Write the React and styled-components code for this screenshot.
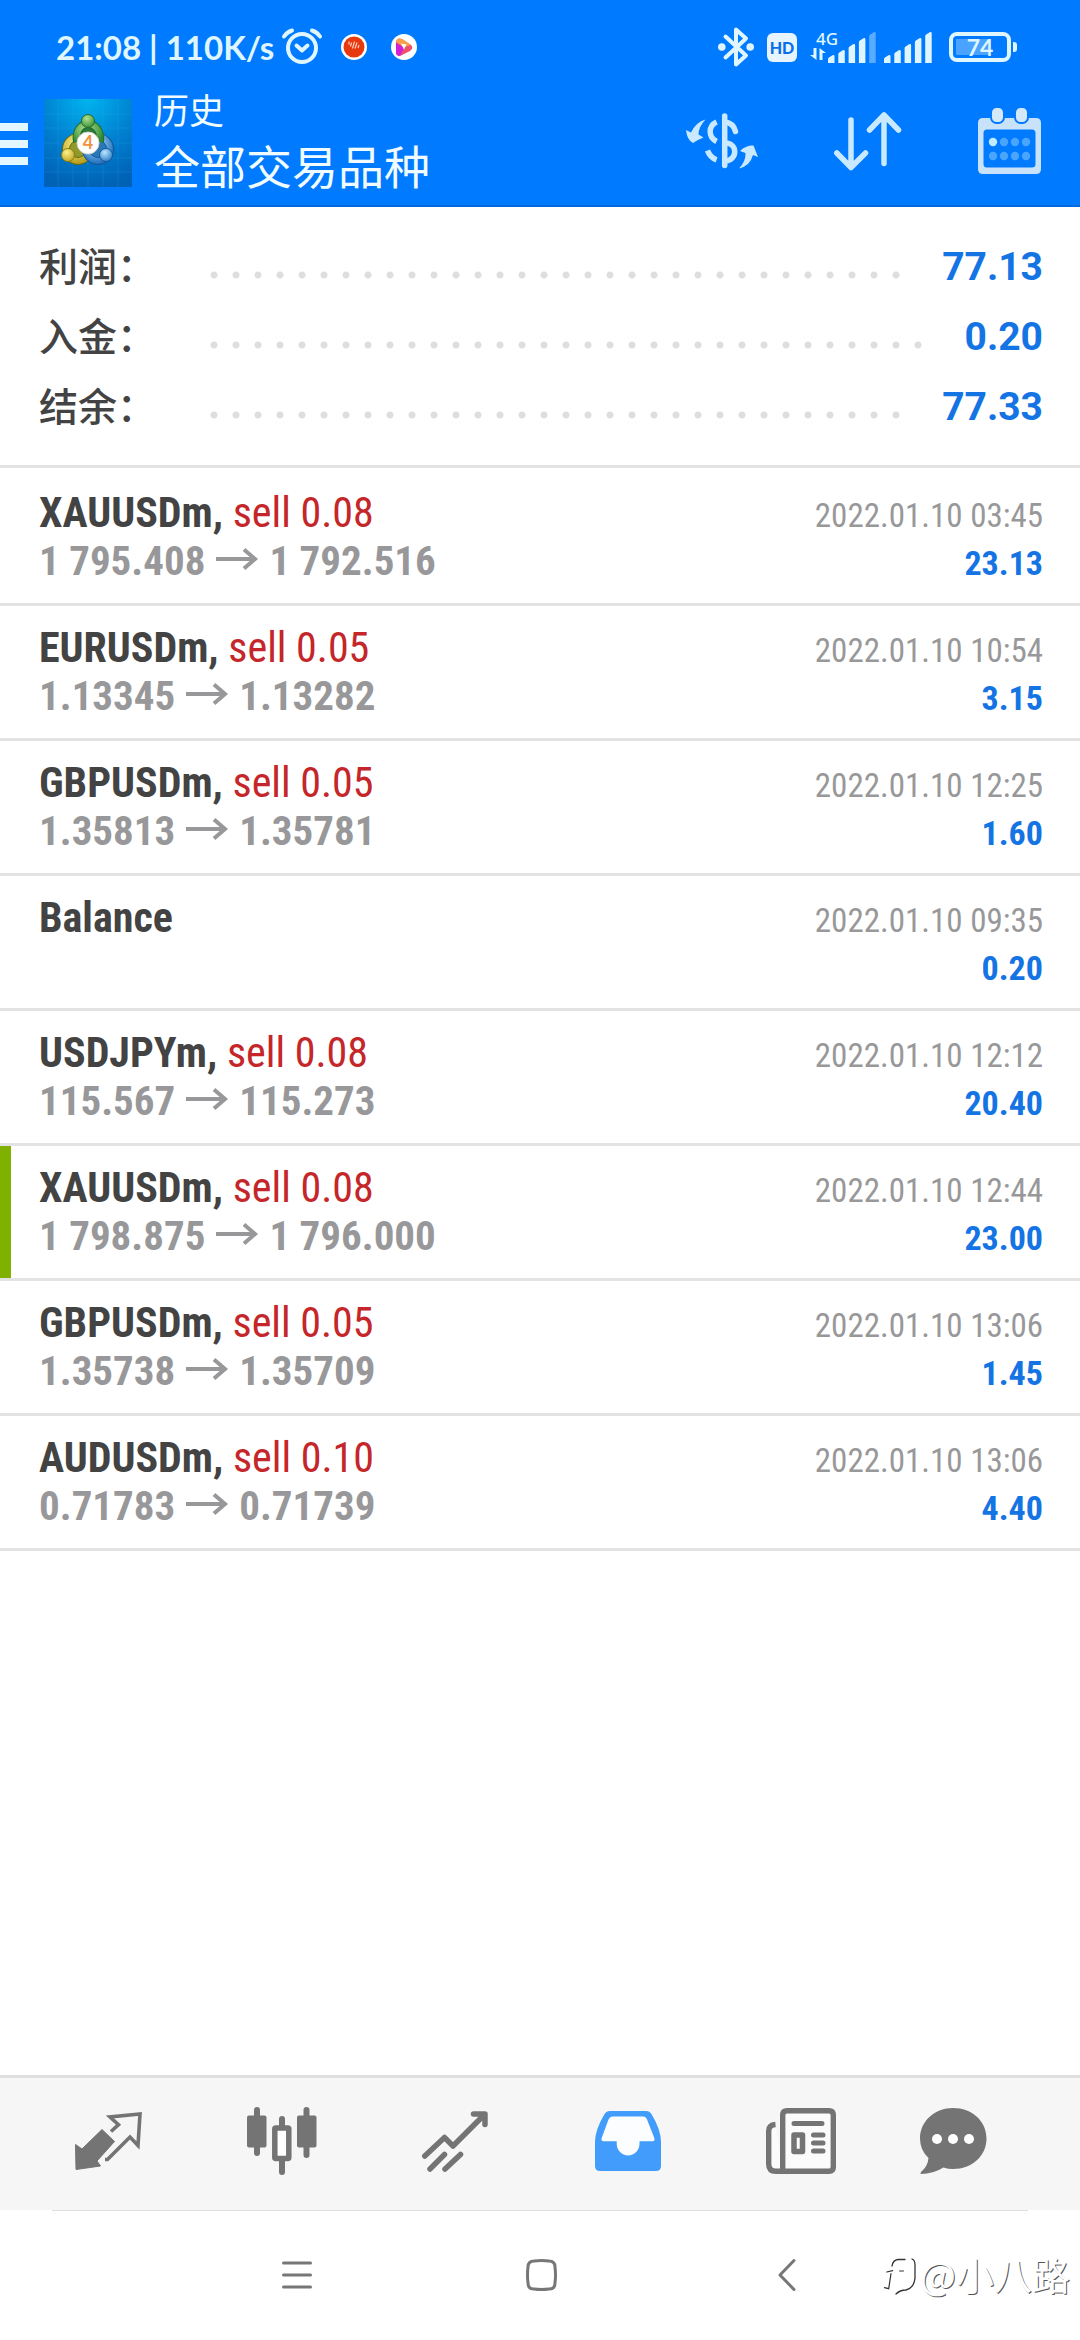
import React from "react";
import styled, { createGlobalStyle } from "styled-components";

const condensed = `"Roboto Condensed", "Liberation Sans Narrow", Roboto, sans-serif`;
const cjk = `"Noto Sans CJK SC", sans-serif`;

const GlobalStyle = createGlobalStyle`
  *, *::before, *::after { box-sizing: border-box; }
  body {
    margin: 0;
    background: #fff;
    font-family: Roboto, "Noto Sans CJK SC", sans-serif;
  }
  svg { display: block; flex: none; overflow: visible; }
`;

const Screen = styled.div`
  display: flex;
  flex-direction: column;
  min-height: 100vh;
  background: #fff;
`;

const Header = styled.header`
  background: #007aff;
  border-bottom: 2px solid #006be0;
`;

const StatusBar = styled.div`
  display: flex;
  align-items: center;
  justify-content: space-between;
  height: 90px;
  padding: 4px 63px 0 56px;
  color: #dff6ff;
`;

const StatusGroup = styled.div`
  display: flex;
  align-items: center;
  gap: ${(p) => p.$gap}px;
`;

const Clock = styled.span`
  font: 700 33px/40px Lato, sans-serif;
  margin-right: 8px;
  white-space: pre;
`;

const AppIcon = styled.div`
  margin-left: ${(p) => p.$space}px;
`;

const Toolbar = styled.div`
  display: flex;
  align-items: flex-start;
  height: 115px;
  padding-right: 39px;
`;

const IconButton = styled.button`
  display: flex;
  align-items: center;
  justify-content: center;
  padding: 0;
  border: 0;
  background: none;
  color: inherit;
`;

const MenuButton = styled(IconButton)`
  flex-direction: column;
  align-items: flex-start;
  gap: 9px;
  width: 44px;
  height: 108px;
`;

const MenuBar = styled.span`
  width: 28px;
  height: 8px;
  background: #e2f7ff;
`;

const LogoBox = styled.div`
  padding-top: 9px;
  width: 88px;
`;

const Titles = styled.div`
  flex: 1;
  padding-left: 22px;
  color: #f0fcff;
  font-family: ${cjk};
`;

const Caption = styled.div`
  font-size: 35px;
  line-height: 38px;
`;

const Title = styled.h1`
  margin: 0;
  padding-top: 6px;
  font-size: 46px;
  font-weight: 400;
  line-height: 60px;
`;

const Actions = styled.div`
  display: flex;
  align-items: center;
  gap: 76px;
  height: 102px;
  color: #c8e9ff;
`;

const Main = styled.main`
  flex: 1;
`;

const Summary = styled.dl`
  margin: 0 0 3px;
  padding: 24px 37px 24px 39px;
  border-bottom: 3px solid #e3e3e3;
`;

const SummaryRow = styled.div`
  display: flex;
  align-items: flex-start;
  height: 70px;
`;

const SummaryLabel = styled.dt`
  width: 164px;
  color: #434343;
  font: 500 39px/66px ${cjk};
`;

const Leader = styled.span`
  flex: 1;
  height: 8px;
  margin: 40px 34px 0 0;
  background: radial-gradient(circle closest-side, #dedede 3px, transparent 4px) 0 0 / 22px 8px repeat-x;
`;

const SummaryValue = styled.dd`
  margin: 0;
  color: #1474e4;
  font: 700 39px/72px Roboto, sans-serif;
`;

const DealList = styled.ul`
  margin: 0;
  padding: 0;
  list-style: none;
  font-family: ${condensed};
`;

const Deal = styled.li`
  padding: 18px 37px 18px 39px;
  border-bottom: 3px solid #e3e3e3;
  box-shadow: ${(p) => (p.$marked ? "inset 11px 0 0 #7fb100" : "none")};
`;

const DealLine = styled.div`
  display: flex;
  align-items: baseline;
  justify-content: space-between;
  height: 48px;
`;

const Symbol = styled.span`
  color: #434343;
  font-size: 42px;
  font-weight: 700;
  line-height: 48px;
`;

const Side = styled.span`
  color: #c4262a;
  font-weight: 400;
`;

const Prices = styled.span`
  color: #98989a;
  font-size: 41px;
  font-weight: 700;
  line-height: 48px;

  svg {
    display: inline-block;
    margin: 0 11px;
    vertical-align: 5px;
  }
`;

const Time = styled.time`
  color: #98989a;
  font-size: 33px;
  line-height: 39px;
`;

const Profit = styled.span`
  color: #1474e4;
  font-size: 34px;
  font-weight: 700;
  line-height: 40px;
`;

const Tabs = styled.nav`
  display: grid;
  grid-template-columns: repeat(5, 173fr) 133fr;
  align-items: center;
  height: 135px;
  padding: 0 60px 6px 22px;
  border-top: 3px solid #e0e0e0;
  background: #f6f6f6;
`;

const Tab = styled(IconButton)`
  height: 126px;
  color: ${(p) => (p.$active ? "#429cfb" : "#747474")};
`;

const SystemNav = styled.div`
  position: relative;
  display: flex;
  align-items: center;
  justify-content: center;
  gap: 201px;
  height: 130px;
  padding-left: 3px;
  color: #777;

  &::before {
    content: "";
    position: absolute;
    top: 0;
    left: 52px;
    right: 52px;
    height: 1px;
    background: #dedede;
  }
`;

const SystemButton = styled(IconButton)`
  width: 44px;
  height: 60px;
`;

const Watermark = styled.div`
  position: absolute;
  right: 10px;
  bottom: 38px;
  display: flex;
  align-items: center;
  gap: 2px;
  color: #fff;
  font: 400 38px/56px ${cjk};
  text-shadow: 1px 1px 0 #555;
`;

const line = (width) => ({
  fill: "none",
  stroke: "currentColor",
  strokeWidth: width,
  strokeLinecap: "round",
  strokeLinejoin: "round",
});

const AlarmIcon = () => (
  <svg width="40" height="38" viewBox="0 0 40 38" {...line(4)}>
    <circle cx="20" cy="20" r="14" />
    <path d="M14.5 17.5 20 22.5 25.5 17.5M2 8.5Q5 4 10 2.5M38 8.5Q35 4 30 2.5" />
  </svg>
);

const RecorderAppIcon = () => (
  <svg width="26" height="26" viewBox="0 0 26 26">
    <circle cx="13" cy="13" r="13" fill="#fff" />
    <circle cx="13" cy="13" r="10.5" fill="#e8380f" />
    <path d="M8 7.500v3M10.500 8.500l-1 4M13.500 7.500l-2 7M16 8.500l-2 6M18 11l-1 3" stroke="#ffd0bc" strokeWidth="1.200" />
  </svg>
);

const VideoAppIcon = () => (
  <svg width="26" height="26" viewBox="0 0 26 26">
    <circle cx="13" cy="13" r="13" fill="#fff" />
    <path d="M5 8Q6 3 11 5L20 11Q23 14 19 17L9 22Q5 22 5 18Z" fill="#f0506a" />
    <path d="M5 8Q6 3 11 5L20 11 13 13Z" fill="#f9a04a" />
    <path d="M5 9 13 14 9 22Q5 22 5 18Z" fill="#d01fd8" />
    <path d="M10 9.500 15.500 10.500 13 15.500Z" fill="#fff" />
  </svg>
);

const BluetoothIcon = () => (
  <svg width="36" height="40" viewBox="0 0 36 40" {...line(4)}>
    <path d="M7.500 9.500 28 28.500 18 37.500V2.500L28 11.500 7.500 30.500" />
    <circle cx="3.800" cy="20" r="1.800" />
    <circle cx="32.200" cy="20" r="1.800" />
  </svg>
);

const HdBadge = styled.span`
  width: 30px;
  height: 29px;
  border-radius: 6px;
  background: #e6f4ff;
  color: #0a6fe6;
  font: 900 16px/29px Lato, sans-serif;
  text-align: center;
`;

const Network = styled.span`
  display: flex;
  flex-direction: column;
  align-items: flex-start;
  height: 34px;
  width: 18px;
  font: 500 17px/18px "Noto Sans", sans-serif;

  span {
    padding-left: 6px;
  }
`;

const DataArrows = () => (
  <svg width="16" height="12" viewBox="0 0 16 12" fill="currentColor">
    <path d="M3.500 0h3v12L0 7h3.500ZM9.500 12h3V5H16L9.500 0Z" />
  </svg>
);

const SignalIcon = ({ bars }) => (
  <svg width="48" height="31" viewBox="0 0 48 31" fill="currentColor">
    {[8, 13, 19, 25, 31].map((h, i) => (
      <path
        key={h}
        opacity={i < bars ? 1 : 0.4}
        d={`M${i * 10.3} 31v${4 - h}q0-1 1-1.500l3.500-2.200q2-.8 2 1V31Z`}
      />
    ))}
  </svg>
);

const Battery = styled.span`
  position: relative;
  display: block;
  width: 62px;
  height: 30px;
  margin: 0 6px 0 4px;
  border: 4px solid #dff6ff;
  border-radius: 8px;
  background: linear-gradient(90deg, #4aa3ff 68%, transparent 68%) content-box;
  padding: 3px;
  font: 700 23px/22px Lato, sans-serif;
  text-align: center;

  span {
    position: absolute;
    inset: 0;
  }

  &::after {
    content: "";
    position: absolute;
    right: -10px;
    top: 6px;
    width: 4px;
    height: 10px;
    border-radius: 0 3px 3px 0;
    background: #dff6ff;
  }
`;

const TerminalLogo = () => (
  <svg width="88" height="88" viewBox="0 0 88 88" role="img" aria-label="MetaTrader 4">
    <defs>
      <radialGradient id="logoSky" cx="0.5" cy="0" r="1">
        <stop offset="0" stopColor="#00b4f0" />
        <stop offset="0.55" stopColor="#007fd0" />
        <stop offset="1" stopColor="#0062b4" />
      </radialGradient>
      <radialGradient id="logoGreen" cx="0.4" cy="0.3" r="0.8">
        <stop offset="0" stopColor="#b4e08c" />
        <stop offset="1" stopColor="#2c8a34" />
      </radialGradient>
      <radialGradient id="logoYellow" cx="0.4" cy="0.3" r="0.8">
        <stop offset="0" stopColor="#fff08a" />
        <stop offset="1" stopColor="#b8a01c" />
      </radialGradient>
      <radialGradient id="logoBlue" cx="0.4" cy="0.3" r="0.8">
        <stop offset="0" stopColor="#b8e6ff" />
        <stop offset="1" stopColor="#2272be" />
      </radialGradient>
    </defs>
    <rect width="88" height="88" fill="url(#logoSky)" />
    <path
      d="M14 0V88M29 0V88M44 0V88M59 0V88M74 0V88M0 15H88M0 29H88M0 44H88M0 59H88M0 73H88"
      stroke="#35a8ea"
      strokeOpacity="0.2"
    />
    <circle cx="34" cy="50" r="12" fill="#8f9a2a" stroke="#5f6d1a" strokeWidth="8" />
    <circle cx="34" cy="50" r="12" fill="none" stroke="url(#logoYellow)" strokeWidth="6" />
    <circle cx="54" cy="50" r="12" fill="#2a78b8" stroke="#15569a" strokeWidth="8" />
    <circle cx="54" cy="50" r="12" fill="none" stroke="url(#logoBlue)" strokeWidth="6" />
    <path d="M33 43C29 19 59 19 56 43" fill="#2c7a3c" stroke="#1f6d2c" strokeWidth="8" />
    <path d="M33 43C29 19 59 19 56 43" fill="none" stroke="url(#logoGreen)" strokeWidth="6" />
    <circle cx="44" cy="22" r="6.500" fill="url(#logoGreen)" stroke="#1f6d2c" />
    <circle cx="24" cy="56" r="6.500" fill="url(#logoYellow)" stroke="#8a7a14" />
    <circle cx="62" cy="56" r="6.500" fill="url(#logoBlue)" stroke="#15569a" />
    <circle cx="44" cy="44" r="11" fill="#fff" stroke="#d8d4c8" />
    <text x="44" y="50" textAnchor="middle" fontFamily="Lato, sans-serif" fontWeight="700" fontSize="18" fill="#f0943c">
      4
    </text>
  </svg>
);

const CurrencyIcon = () => (
  <svg width="72" height="56" viewBox="0 0 72 56">
    <g fill="none" stroke="currentColor" strokeWidth="5.500">
      <path d="M38.700 3V52.500" strokeLinecap="round" />
      <path d="M39 9Q47.500 10 49.500 18.500" strokeLinecap="round" />
      <path d="M39 30C52 30 52 47 39 48" />
      <path d="M30.600 9C22 13 22 24 30.600 28.500" />
      <path d="M21.500 37.500Q24 44.500 30.600 46.800" />
    </g>
    <g fill="currentColor">
      <path d="M0 17 5 19.500Q10 9 19.500 6.500 12.500 14 12.500 21.500L17.500 24.500Q11 27 7 30Q1 27 0 17Z" />
      <path d="M54 38Q60 32 67.500 32.500L72 44 67 42Q64 53 53 55.500 60 48 59.500 40Z" />
    </g>
  </svg>
);

const SortIcon = () => (
  <svg width="68" height="58" viewBox="0 0 68 58" {...line(5.5)}>
    <path d="M17 8V55M2.800 41 17 55.500 31.500 41" />
    <path d="M50 51.500V3M35.500 18 50 3 64.500 18" />
  </svg>
);

const CalendarIcon = () => (
  <svg width="63" height="66" viewBox="0 0 63 66">
    <path
      fill="#c8e2fa"
      fillRule="evenodd"
      d="M5 10H58Q63 10 63 15V61Q63 66 58 66H5Q0 66 0 61V15Q0 10 5 10ZM9 21.500Q5.500 21.500 5.500 25V56Q5.500 59.500 9 59.500H54Q57.500 59.500 57.500 56V25Q57.500 21.500 54 21.500Z"
    />
    {[14, 38].map((x) => (
      <rect key={x} x={x - 1} y="-1" width="13" height="16" rx="5.500" fill="#d4e8fa" stroke="#007aff" strokeWidth="2" />
    ))}
    {[34, 48].map((y) =>
      [15, 26, 37, 48].map((x) => (
        <circle key={x + "-" + y} cx={x} cy={y} r="4.200" fill={x === 15 && y === 34 ? "#c0ecff" : "#4aa5ff"} />
      ))
    )}
  </svg>
);

const ArrowIcon = () => (
  <svg width="42" height="22" viewBox="0 0 42 22" fill="none" stroke="currentColor" strokeWidth="4">
    <path d="M0 11H39M28 1.500 39 11 28 20.500" />
  </svg>
);

const QuotesIcon = () => (
  <svg width="67" height="58" viewBox="0 0 67 58">
    <path
      fill="currentColor"
      stroke="currentColor"
      strokeLinejoin="round"
      d="M.5 32.500 7 37 27 17.500 39.500 29.500 22 49 25.500 54 1 57.500Z"
    />
    <path
      fill="none"
      stroke="currentColor"
      strokeWidth="3.600"
      strokeLinejoin="miter"
      d="M36 19.500 43.500 12.700 35 5 65 2 63 33.500 55 25 32.500 47.500H30"
    />
  </svg>
);

const ChartIcon = () => (
  <svg width="70" height="68" viewBox="0 0 70 68" fill="currentColor">
    <rect x="7" width="6" height="49" rx="3" />
    <rect y="8.500" width="19.500" height="32" rx="2" />
    <rect x="32" y="9" width="6" height="14" rx="3" />
    <rect x="32" y="50" width="6" height="18" rx="3" />
    <rect x="27.800" y="21" width="14" height="30.500" rx="1" fill="#fff" stroke="currentColor" strokeWidth="5.500" />
    <rect x="56.500" width="6" height="51" rx="3" />
    <rect x="50" y="8.500" width="19.500" height="32" rx="2" />
  </svg>
);

const TradeIcon = () => (
  <svg width="66" height="61" viewBox="0 0 66 61" {...line(5.5)}>
    <path d="M2.800 45 22.500 26.500 31 35 62.500 3.500M51.500 3H63V13.500" />
    <path d="M8 58 22.500 43.500M23 58 38.500 43.500" />
  </svg>
);

const HistoryIcon = () => (
  <svg width="66" height="60" viewBox="0 0 66 60">
    <path
      fill="currentColor"
      d="M15 0H51Q55 0 57 4Q66 19 66 31V55Q66 60 61 60H5Q0 60 0 55V31Q0 19 9 4Q11 0 15 0Z"
    />
    <path
      fill="#fbfdff"
      d="M18 5.500H48Q51 5.500 52 8.500L59.500 27.500Q60 30 58 30.300H44.500V33A11.400 11.400 0 0 1 21.700 33V30.300H8.500Q6 30 6.500 27.500L13.500 8.500Q15 5.500 18 5.500Z"
    />
  </svg>
);

const NewsIcon = () => (
  <svg width="70" height="66" viewBox="0 0 70 66">
    <path
      d="M9.500 16.500Q2.700 17 2.700 23V56Q2.700 63.300 10 63.300H63Q67.300 63.300 67.300 59V7Q67.300 2.700 63 2.700H21Q16.700 2.700 16.700 7V63"
      fill="#fbfbfb"
      stroke="currentColor"
      strokeWidth="5.400"
    />
    <path d="M28 15.500H56M47.500 27H57M47.500 35H57M47.500 43H57" {...line(5)} />
    <rect x="28" y="27" width="8.500" height="16.500" {...line(5.5)} />
  </svg>
);

const MessagesIcon = () => (
  <svg width="67" height="66" viewBox="0 0 67 66">
    <path
      fill="currentColor"
      d="M33 0C52 0 66.500 13 66.500 30.500S52 61 33 61Q28 61 23.500 59.500Q13 66 1 66Q0 65.500 1 64Q8 58 8.500 50Q0 42 0 30.500C0 13 15 0 33 0Z"
    />
    {[17, 33, 49].map((x) => (
      <circle key={x} cx={x} cy="31" r="5" fill="#fff" />
    ))}
  </svg>
);

const RecentsIcon = () => (
  <svg width="30" height="28" viewBox="0 0 30 28" {...line(3)}>
    <path d="M1.500 2H28.500M1.500 14H28.500M1.500 26H28.500" />
  </svg>
);

const HomeIcon = () => (
  <svg width="31" height="32" viewBox="0 0 31 32" {...line(3)}>
    <path d="M8 2Q15.500 1 23 2 29 2 29 8 30 16 29 24 29 30 23 30 15.500 31 8 30 2 30 2 24 1 16 2 8 2 2 8 2Z" />
  </svg>
);

const BackIcon = () => (
  <svg width="18" height="32" viewBox="0 0 18 32" {...line(3)}>
    <path d="M16 1.500 2 16 16 30.500" />
  </svg>
);

const WatermarkLogo = () => (
  <svg width="34" height="34" viewBox="0 3 34 34" fill="none" stroke="#333" strokeLinecap="round">
    <path d="M8 12Q9 6 14 5.500H21M28 5Q31 6 31 11V24Q30 34 22 36 16 36 12 40" strokeWidth="1.300" />
    <path d="M2.700 18 8.700 16.700M7 19.500 4.700 34.700.5 33.700" strokeWidth="1.200" />
    <path d="M15.500 17H19.500" strokeWidth="1" />
  </svg>
);

const summary = [
  ["利润：", "77.13"],
  ["入金：", "0.20"],
  ["结余：", "77.33"],
];

const deals = [
  { symbol: "XAUUSDm", side: "sell 0.08", open: "1 795.408", close: "1 792.516", time: "2022.01.10 03:45", profit: "23.13" },
  { symbol: "EURUSDm", side: "sell 0.05", open: "1.13345", close: "1.13282", time: "2022.01.10 10:54", profit: "3.15" },
  { symbol: "GBPUSDm", side: "sell 0.05", open: "1.35813", close: "1.35781", time: "2022.01.10 12:25", profit: "1.60" },
  { symbol: "Balance", time: "2022.01.10 09:35", profit: "0.20" },
  { symbol: "USDJPYm", side: "sell 0.08", open: "115.567", close: "115.273", time: "2022.01.10 12:12", profit: "20.40" },
  { symbol: "XAUUSDm", side: "sell 0.08", open: "1 798.875", close: "1 796.000", time: "2022.01.10 12:44", profit: "23.00", marked: true },
  { symbol: "GBPUSDm", side: "sell 0.05", open: "1.35738", close: "1.35709", time: "2022.01.10 13:06", profit: "1.45" },
  { symbol: "AUDUSDm", side: "sell 0.10", open: "0.71783", close: "0.71739", time: "2022.01.10 13:06", profit: "4.40" },
];

const tabs = [
  ["行情", QuotesIcon],
  ["图表", ChartIcon],
  ["交易", TradeIcon],
  ["历史", HistoryIcon],
  ["新闻", NewsIcon],
  ["消息", MessagesIcon],
];

export default function App() {
  return (
    <Screen>
      <GlobalStyle />
      <Header>
        <StatusBar>
          <StatusGroup $gap={0}>
            <Clock>21:08 | 110K/s</Clock>
            <AlarmIcon />
            <AppIcon $space={19}><RecorderAppIcon /></AppIcon>
            <AppIcon $space={24}><VideoAppIcon /></AppIcon>
          </StatusGroup>
          <StatusGroup $gap={13}>
            <BluetoothIcon />
            <HdBadge>HD</HdBadge>
            <StatusGroup $gap={0}>
              <Network><span>4G</span><DataArrows /></Network>
              <StatusGroup $gap={8}>
                <SignalIcon bars={4} />
                <SignalIcon bars={5} />
              </StatusGroup>
            </StatusGroup>
            <Battery><span>74</span></Battery>
          </StatusGroup>
        </StatusBar>
        <Toolbar>
          <MenuButton aria-label="菜单">
            <MenuBar />
            <MenuBar />
            <MenuBar />
          </MenuButton>
          <LogoBox><TerminalLogo /></LogoBox>
          <Titles>
            <Caption>历史</Caption>
            <Title>全部交易品种</Title>
          </Titles>
          <Actions>
            <IconButton aria-label="货币"><CurrencyIcon /></IconButton>
            <IconButton aria-label="排序"><SortIcon /></IconButton>
            <IconButton aria-label="日期"><CalendarIcon /></IconButton>
          </Actions>
        </Toolbar>
      </Header>

      <Main>
        <Summary>
          {summary.map(([label, value]) => (
            <SummaryRow key={label}>
              <SummaryLabel>{label}</SummaryLabel>
              <Leader />
              <SummaryValue>{value}</SummaryValue>
            </SummaryRow>
          ))}
        </Summary>
        <DealList>
          {deals.map((d, i) => (
            <Deal key={i} $marked={d.marked}>
              <DealLine>
                <Symbol>
                  {d.symbol}
                  {d.side && <>, <Side>{d.side}</Side></>}
                </Symbol>
                <Time>{d.time}</Time>
              </DealLine>
              <DealLine>
                <Prices>
                  {d.open ? <>{d.open}<ArrowIcon />{d.close}</> : "\u00a0"}
                </Prices>
                <Profit>{d.profit}</Profit>
              </DealLine>
            </Deal>
          ))}
        </DealList>
      </Main>

      <Tabs>
        {tabs.map(([label, Icon]) => (
          <Tab key={label} aria-label={label} $active={label === "历史"}>
            <Icon />
          </Tab>
        ))}
      </Tabs>
      <SystemNav>
        <SystemButton aria-label="最近任务"><RecentsIcon /></SystemButton>
        <SystemButton aria-label="主屏幕"><HomeIcon /></SystemButton>
        <SystemButton aria-label="返回"><BackIcon /></SystemButton>
        <Watermark><WatermarkLogo />@小八路</Watermark>
      </SystemNav>
    </Screen>
  );
}
